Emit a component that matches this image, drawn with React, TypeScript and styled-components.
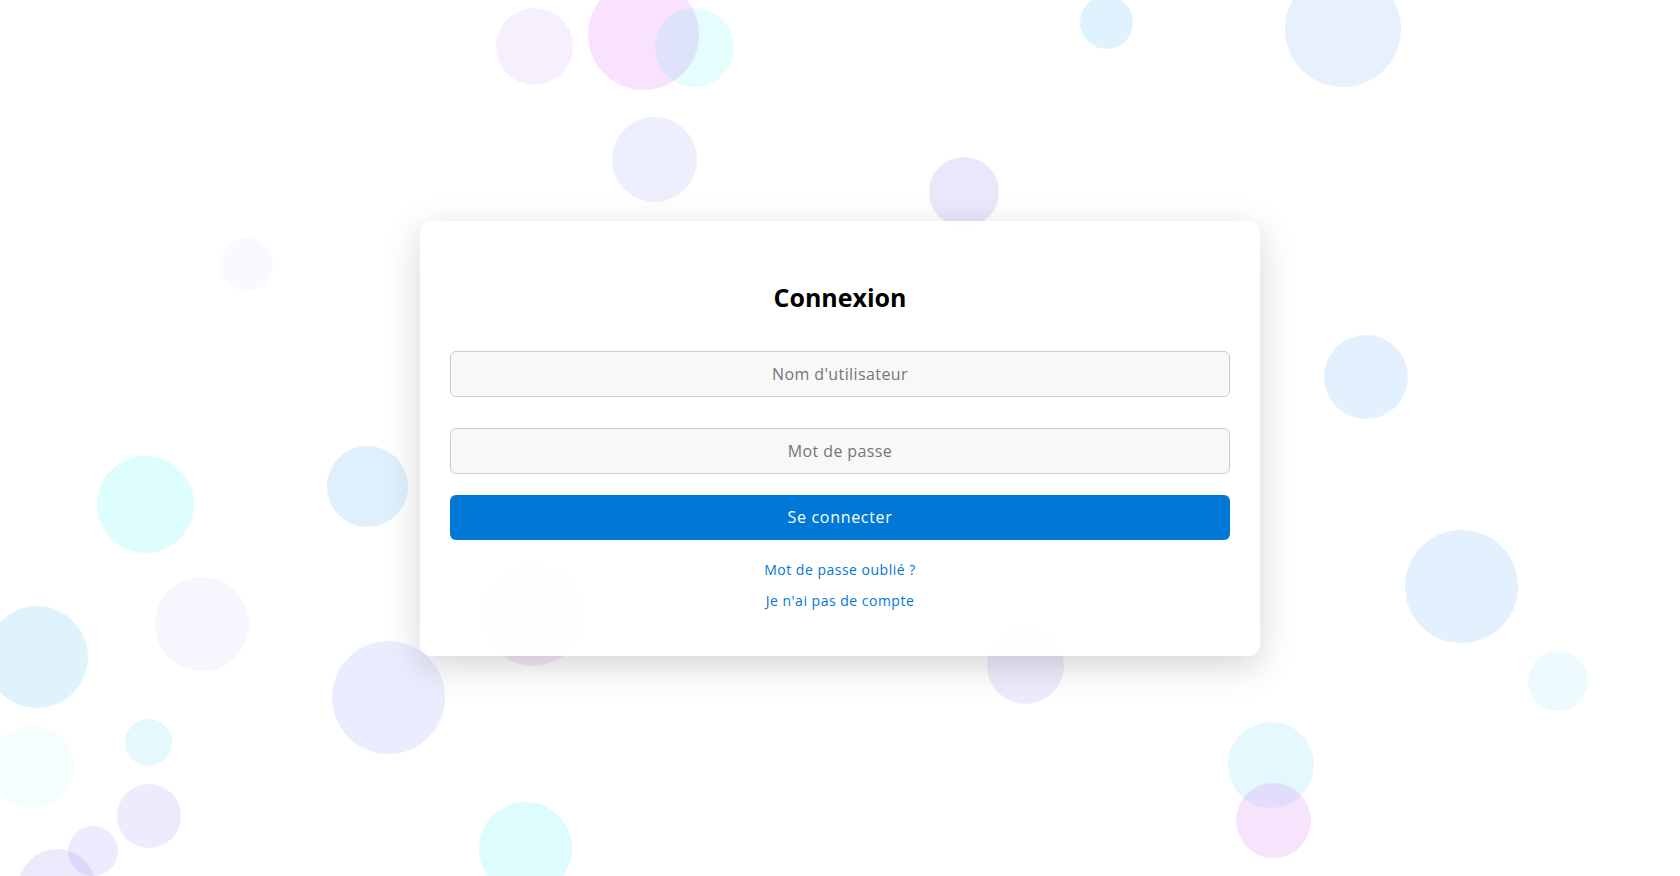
import React from "react";
import styled, { createGlobalStyle } from "styled-components";

const GlobalStyle = createGlobalStyle`
  * {
    box-sizing: border-box;
  }
  html,
  body {
    margin: 0;
    padding: 0;
    background: #ffffff;
    font-family: "Open Sans", "Liberation Sans", sans-serif;
  }
`;

interface BubbleData {
  x: number;
  y: number;
  size: number;
  color: string;
}

// centre x, centre y, diameter, tint
const bubbles: BubbleData[] = [
  { x: 534, y: 46, size: 77, color: "rgba(160, 80, 240, 0.09)" },
  { x: 643, y: 34, size: 111, color: "rgba(200, 30, 240, 0.13)" },
  { x: 694, y: 47, size: 79, color: "rgba(0, 235, 240, 0.1)" },
  { x: 654, y: 159, size: 85, color: "rgba(80, 100, 240, 0.1)" },
  { x: 246, y: 264, size: 53, color: "rgba(160, 110, 240, 0.04)" },
  { x: 1106, y: 22, size: 53, color: "rgba(30, 160, 240, 0.14)" },
  { x: 1343, y: 29, size: 116, color: "rgba(30, 130, 240, 0.11)" },
  { x: 964, y: 192, size: 70, color: "rgba(100, 60, 230, 0.13)" },
  { x: 1366, y: 377, size: 84, color: "rgba(30, 150, 240, 0.13)" },
  { x: 145, y: 504, size: 97, color: "rgba(0, 240, 240, 0.13)" },
  { x: 367, y: 486, size: 81, color: "rgba(30, 150, 240, 0.14)" },
  { x: 37, y: 657, size: 102, color: "rgba(30, 170, 240, 0.14)" },
  { x: 202, y: 624, size: 94, color: "rgba(80, 100, 240, 0.05)" },
  { x: 388, y: 697, size: 113, color: "rgba(60, 90, 240, 0.11)" },
  { x: 32, y: 766, size: 83, color: "rgba(0, 240, 240, 0.04)" },
  { x: 148, y: 742, size: 47, color: "rgba(0, 200, 240, 0.1)" },
  { x: 149, y: 816, size: 64, color: "rgba(100, 60, 240, 0.1)" },
  { x: 93, y: 851, size: 50, color: "rgba(80, 60, 240, 0.1)" },
  { x: 57, y: 888, size: 78, color: "rgba(80, 60, 240, 0.11)" },
  { x: 525, y: 848, size: 93, color: "rgba(0, 235, 240, 0.13)" },
  { x: 539, y: 392, size: 98, color: "rgba(80, 100, 240, 0.05)" },
  { x: 533, y: 615, size: 102, color: "rgba(200, 40, 230, 0.1)" },
  { x: 578, y: 606, size: 91, color: "rgba(80, 100, 240, 0.05)" },
  { x: 1025, y: 665, size: 77, color: "rgba(100, 60, 230, 0.1)" },
  { x: 1140, y: 555, size: 87, color: "rgba(30, 150, 240, 0.05)" },
  { x: 1461, y: 586, size: 113, color: "rgba(30, 150, 240, 0.13)" },
  { x: 1558, y: 681, size: 60, color: "rgba(0, 200, 240, 0.07)" },
  { x: 1271, y: 765, size: 86, color: "rgba(0, 190, 240, 0.1)" },
  { x: 1273, y: 820, size: 75, color: "rgba(200, 40, 240, 0.13)" },
];

const Page = styled.div`
  position: relative;
  width: 100%;
  height: 100vh;
  overflow: hidden;
  display: flex;
  align-items: center;
  justify-content: center;
`;

const Bubbles = styled.div`
  position: absolute;
  inset: 0;
  pointer-events: none;
`;

const Bubble = styled.span`
  position: absolute;
  border-radius: 50%;
`;

const Card = styled.div`
  position: relative;
  z-index: 1;
  width: 840px;
  padding: 40px 30px 45px;
  background: rgba(255, 255, 255, 0.93);
  border-radius: 12px;
  box-shadow: 0 10px 36px rgba(0, 0, 0, 0.17);
  display: flex;
  flex-direction: column;
  align-items: stretch;
`;

const Title = styled.h2`
  margin: 18px 0 36px;
  text-align: center;
  font-size: 25px;
  line-height: 36px;
  font-weight: 700;
  color: #000000;
`;

const Field = styled.input<{ gap: number }>`
  height: 46px;
  margin: 0 0 ${({ gap }) => gap}px;
  padding: 0 12px;
  border: 1px solid #cccccc;
  border-radius: 6px;
  background: #f8f8f8;
  font-family: inherit;
  font-size: 16px;
  letter-spacing: 0.4px;
  text-align: center;
  color: #333333;
  outline: none;

  &::placeholder {
    color: #757575;
  }
`;

const SubmitButton = styled.button`
  height: 45px;
  border: none;
  border-radius: 6px;
  background: #0078d7;
  color: #ffffff;
  font-family: inherit;
  font-size: 16px;
  letter-spacing: 0.7px;
  cursor: pointer;
`;

const Links = styled.div`
  margin-top: 19px;
  display: flex;
  flex-direction: column;
  align-items: center;
  gap: 10px;
`;

const TextLink = styled.a`
  font-size: 14px;
  line-height: 21px;
  letter-spacing: 0.5px;
  color: #0078d7;
  text-decoration: none;
`;

export default function App() {
  return (
    <>
      <GlobalStyle />
      <Page>
        <Bubbles>
          {bubbles.map((b, i) => (
            <Bubble
              key={i}
              style={{
                left: b.x - b.size / 2,
                top: b.y - b.size / 2,
                width: b.size,
                height: b.size,
                background: b.color,
              }}
            />
          ))}
        </Bubbles>
        <Card>
          <Title>Connexion</Title>
          <Field gap={31} type="text" placeholder="Nom d'utilisateur" />
          <Field gap={21} type="password" placeholder="Mot de passe" />
          <SubmitButton>Se connecter</SubmitButton>
          <Links>
            <TextLink href="#">Mot de passe oublié ?</TextLink>
            <TextLink href="#">Je n'ai pas de compte</TextLink>
          </Links>
        </Card>
      </Page>
    </>
  );
}
